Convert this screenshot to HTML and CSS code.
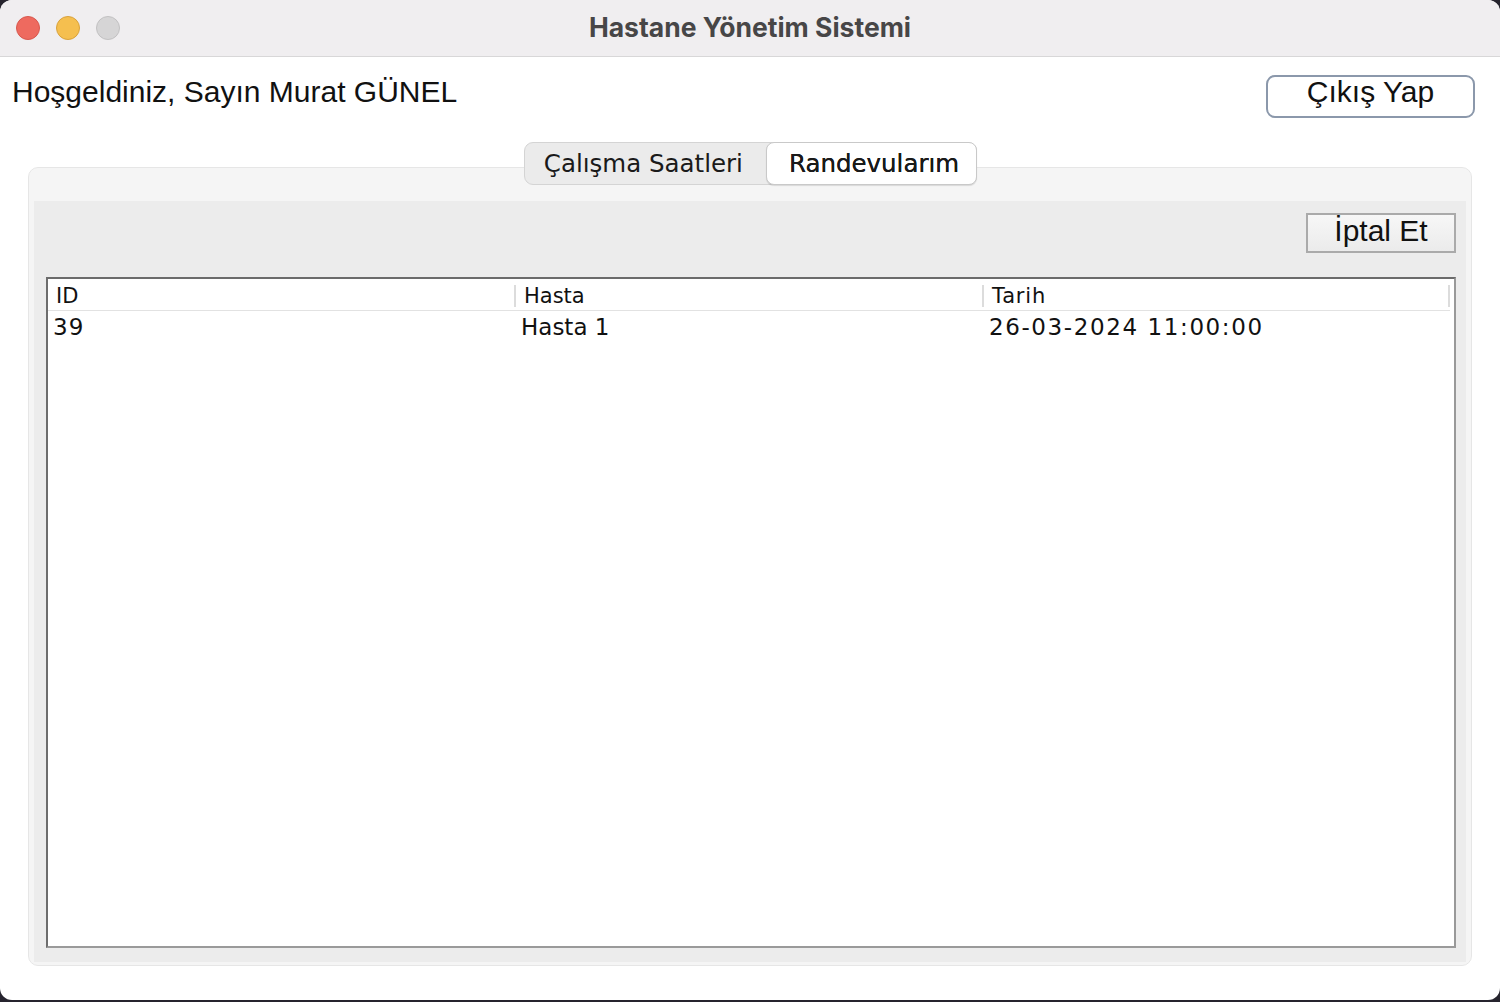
FILE: index.html
```html
<!DOCTYPE html>
<html lang="tr">
<head>
<meta charset="utf-8">
<title>Hastane Yönetim Sistemi</title>
<link rel="stylesheet" href="styles.css">
</head>
<body>
<div class="window">
  <div class="titlebar">
    <div class="lights">
      <span class="light red"></span>
      <span class="light yellow"></span>
      <span class="light gray"></span>
    </div>
    <div class="title">Hastane Yönetim Sistemi</div>
  </div>
  <div class="content">
    <div class="top-row">
      <div class="welcome">Hoşgeldiniz, Sayın Murat GÜNEL</div>
      <button class="logout">Çıkış Yap</button>
    </div>
    <div class="tabs">
      <div class="tab">Çalışma Saatleri</div>
      <div class="tab selected">Randevularım</div>
    </div>
    <div class="panel">
      <div class="panel-inner">
        <div class="actions">
          <button class="cancel">İptal Et</button>
        </div>
        <div class="table">
          <div class="thead">
            <div class="th">ID</div>
            <div class="th">Hasta</div>
            <div class="th wide">Tarih</div>
          </div>
          <div class="tr">
            <div class="td num">39</div>
            <div class="td">Hasta 1</div>
            <div class="td date">26-03-2024 11:00:00</div>
          </div>
        </div>
      </div>
    </div>
  </div>
</div>
</body>
</html>
```

FILE: styles.css
```css
html, body {
  margin: 0;
  padding: 0;
}
body {
  background: #26242e;
  width: 1500px;
  height: 1002px;
  overflow: hidden;
}
.window {
  width: 1500px;
  height: 1000px;
  background: #ffffff;
  border-radius: 12px;
  overflow: hidden;
  display: flex;
  flex-direction: column;
}
.titlebar {
  height: 56px;
  background: #f0eef0;
  border-bottom: 1px solid #d8d7d8;
  display: flex;
  align-items: center;
  position: relative;
  flex-shrink: 0;
}
.lights {
  display: flex;
  gap: 16px;
  padding-left: 16px;
}
.light {
  width: 22px;
  height: 22px;
  border-radius: 50%;
  display: block;
}
.light.red { background: #ee6a5f; border: 1px solid #d8584e; }
.light.yellow { background: #f5bf4f; border: 1px solid #d9a23c; }
.light.gray { background: #d6d5d6; border: 1px solid #c2c1c2; }
.title {
  position: absolute;
  left: 0;
  right: 0;
  top: 0;
  height: 56px;
  line-height: 54px;
  text-align: center;
  font-family: Inter, "Liberation Sans", sans-serif;
  font-weight: 700;
  font-size: 26.5px;
  color: #474647;
  pointer-events: none;
}
.content {
  flex: 1;
  display: flex;
  flex-direction: column;
  padding: 0 28px 34px 28px;
}
.top-row {
  display: flex;
  justify-content: space-between;
  align-items: flex-start;
  margin: 0 -3px 0 -16px;
}
.welcome {
  margin-top: 18px;
  font-family: "Liberation Sans", Arial, sans-serif;
  font-size: 30px;
  line-height: 34px;
  color: #111;
}
.logout {
  margin-top: 18px;
  width: 209px;
  height: 43px;
  box-sizing: border-box;
  background: #ffffff;
  border: 2px solid #8b98ab;
  border-radius: 9px;
  font-family: "Liberation Sans", Arial, sans-serif;
  font-size: 30px;
  line-height: 25px;
  padding: 0 0 11px 0;
  color: #111;
}
.tabs {
  align-self: center;
  margin-top: 24px;
  margin-left: 1px;
  display: flex;
  height: 43px;
  box-sizing: border-box;
  border: 1px solid #d4d4d4;
  border-radius: 9px;
  background: #ebebeb;
  position: relative;
  z-index: 1;
}
.tab {
  font-family: "DejaVu Sans", "Liberation Sans", sans-serif;
  font-size: 24.5px;
  line-height: 41px;
  color: #1a1a1a;
  padding: 0 23px 0 19px;
}
.tab.selected {
  background: #ffffff;
  border-radius: 8px;
  margin: -1px -1px -1px 0;
  border: 1px solid #c9c9c9;
  box-shadow: 0 1px 1px rgba(0,0,0,0.12);
  padding: 0 17px 0 22px;
  text-shadow: 0 0 0.4px #000;
}
.panel {
  flex: 1;
  margin-top: -18px;
  background: #f5f5f5;
  border: 1px solid #e6e6e6;
  border-radius: 10px;
  padding: 33px 5px 3px 5px;
  display: flex;
  flex-direction: column;
}
.panel-inner {
  flex: 1;
  background: #ececec;
  padding: 12px 10px 14px 12px;
  display: flex;
  flex-direction: column;
}
.actions {
  display: flex;
  justify-content: flex-end;
}
.cancel {
  width: 150px;
  height: 40px;
  box-sizing: border-box;
  border: 2px solid #aaaaaa;
  background: linear-gradient(#f7f7f7, #ebebeb);
  font-family: "Liberation Sans", Arial, sans-serif;
  font-size: 30px;
  line-height: 30px;
  padding: 0 0 5px 0;
  color: #111;
  border-radius: 0;
}
.table {
  margin-top: 24px;
  flex: 1;
  background: #ffffff;
  border-style: solid;
  border-width: 2px;
  border-color: #6b6b6b #999999 #9a9a9a #6d6d6d;
}
.thead {
  display: grid;
  grid-template-columns: 468px 468px 466px;
  height: 32px;
  border-bottom: 1px solid #e2e2e2;
  margin-right: 4px;
  box-sizing: border-box;
  padding-top: 6px;
}
.th {
  height: 22px;
  border-right: 2px solid #dcdcdc;
  padding-left: 8px;
  font-family: "DejaVu Sans", "Liberation Sans", sans-serif;
  font-size: 21px;
  line-height: 22px;
  color: #111;
}
.th.wide {
  letter-spacing: 0.8px;
}
.tr {
  display: grid;
  grid-template-columns: 468px 468px 468px;
  height: 33px;
}
.td {
  padding-left: 5px;
  font-family: "DejaVu Sans", "Liberation Sans", sans-serif;
  font-size: 23px;
  line-height: 33px;
  color: #111;
}
.td.num {
  letter-spacing: 1px;
}
.td.date {
  letter-spacing: 1.6px;
}
```
